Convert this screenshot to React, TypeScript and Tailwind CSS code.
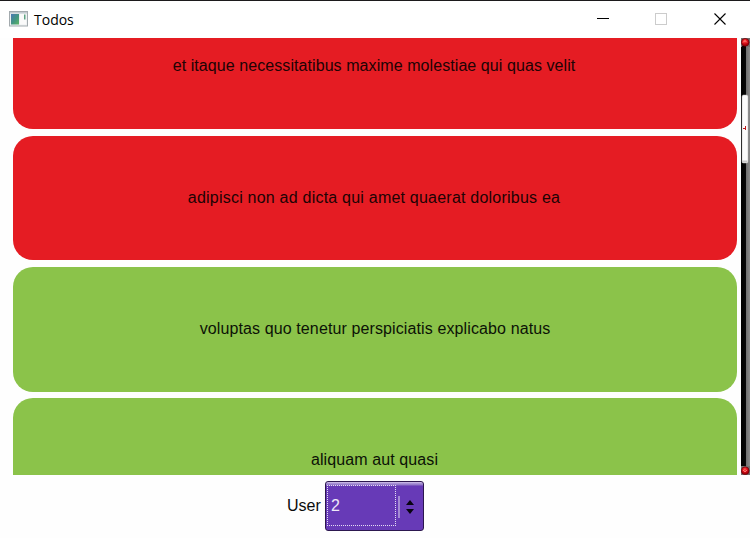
import React from 'react';

type Todo = { title: string; done: boolean; card: string; text: string };

const todos: Todo[] = [
  { title: 'et itaque necessitatibus maxime molestiae qui quas velit', done: false, card: 'h-[124px] pb-[2px] pr-[2px]', text: 'tracking-[0.075px]' },
  { title: 'adipisci non ad dicta qui amet quaerat doloribus ea', done: false, card: 'h-[124px] pr-[2px]', text: 'tracking-[0.22px]' },
  { title: 'voluptas quo tenetur perspiciatis explicabo natus', done: true, card: 'h-[125px] pb-px -mb-px', text: 'tracking-[0.115px]' },
  { title: 'aliquam aut quasi', done: true, card: 'h-[124px] pr-px', text: 'tracking-[0.1px]' },
];

function AppIcon() {
  return (
    <svg width="19" height="16" viewBox="0 0 19 16" className="-mt-px block">
      <defs>
        <linearGradient id="pane" x1="0" y1="0" x2="1" y2="1">
          <stop offset="0" stopColor="#4b78b5" />
          <stop offset="0.55" stopColor="#43977f" />
          <stop offset="1" stopColor="#5fb565" />
        </linearGradient>
      </defs>
      <rect x="0.5" y="0.5" width="18" height="14.5" fill="#eef1f2" stroke="#a3aaae" />
      <rect x="1" y="1" width="17" height="1.5" fill="#c3cbd0" />
      <rect x="2" y="3" width="8" height="10.5" fill="url(#pane)" />
      <rect x="11" y="3" width="6" height="10.5" fill="#fafafa" />
      <rect x="15" y="3.5" width="1.5" height="5" fill="#5fa383" />
    </svg>
  );
}

function TitleBar() {
  return (
    <header className="flex h-[38px] shrink-0 items-center border-t border-[#1c1a1c] bg-white pl-[9px] pr-[23px]">
      <AppIcon />
      <span className="ml-[6px] font-['Open_Sans','Noto_Sans',sans-serif] text-sm leading-5 text-black">Todos</span>
      <svg width="132" height="14" viewBox="0 0 132 14" className="-mt-[2px] ml-auto block" shapeRendering="crispEdges">
        <rect x="2" y="6" width="12" height="1" fill="#000" />
        <rect x="60.5" y="1.5" width="11" height="11" fill="none" stroke="#ccc" />
        <path d="M119.5 1.5l11 11M130.5 1.5l-11 11" stroke="#000" strokeWidth="1.1" shapeRendering="auto" />
      </svg>
    </header>
  );
}

function TodoCard({ title, done, card, text }: Todo) {
  return (
    <li className={`flex shrink-0 items-center justify-center rounded-[20px] ${card} ${done ? 'bg-[#8bc34a]' : 'bg-[#e51c23]'}`}>
      <span className={`whitespace-nowrap text-base leading-5 ${text} ${done ? 'text-[#0c1206]' : 'text-[#200304]'}`}>{title}</span>
    </li>
  );
}

function ScrollBar() {
  return (
    <svg width="9" height="437" viewBox="0 0 9 437" className="block shrink-0">
      <defs>
        <linearGradient id="track">
          <stop offset="0" stopColor="#000" />
          <stop offset="0.5" stopColor="#080808" />
          <stop offset="0.56" stopColor="#6f6f6f" />
          <stop offset="1" stopColor="#8b8b8b" />
        </linearGradient>
        <radialGradient id="knob" cx="0.45" cy="0.35">
          <stop offset="0" stopColor="#ff6258" />
          <stop offset="0.5" stopColor="#e41620" />
          <stop offset="1" stopColor="#ad0009" />
        </radialGradient>
      </defs>
      <rect width="9" height="437" fill="url(#track)" />
      <rect width="9" height="9" fill="#747171" />
      <rect x="1" y="8" width="4" height="2" fill="#100" />
      <circle cx="4.2" cy="4.3" r="3.9" fill="url(#knob)" stroke="#550005" strokeWidth="0.6" />
      <path d="M2 4.5l2-2 2 2" fill="none" stroke="#ff8c82" strokeWidth="0.8" />
      <rect x="1" y="57" width="6" height="68" rx="1.5" fill="#fcfcfc" stroke="#bbb" strokeWidth="0.5" />
      <path d="M1 122.5h5.5v2H1z" fill="#c9c9c9" />
      <path d="M2 90h2v-2h1v4H4v-1H2z" fill="#bd1719" />
      <rect y="428" width="9" height="9" fill="#747171" />
      <circle cx="4.2" cy="432.7" r="3.9" fill="url(#knob)" stroke="#550005" strokeWidth="0.6" />
      <path d="M2 432l2 2 2-2" fill="none" stroke="#ff8c82" strokeWidth="0.8" />
    </svg>
  );
}

function UserSpinner() {
  return (
    <div className="flex h-[50px] w-[99px] items-center rounded-[3px] border border-[#2c174f] bg-[linear-gradient(180deg,#d8cdec_0px,#b29bdb_1px,#8f75c5_3px,#673ab7_4px,#673ab7_100%)] pl-px">
      <div className="-mt-px flex h-[41px] w-[69px] items-center border border-dotted border-[#e5def2] pl-[3px] text-base text-[#eee9f8]">2</div>
      <div className="ml-[2px] mt-[2px] h-[22px] w-[2px] bg-[#a58bd5]" />
      <svg width="8" height="14" viewBox="0 0 8 14" className="ml-[6px] mt-[2px] block">
        <path d="M0 5L4 0l4 5zM0 9h8l-4 5z" fill="#080411" />
      </svg>
    </div>
  );
}

export default function App() {
  return (
    <div className="flex h-[538px] w-[750px] flex-col overflow-hidden bg-[#fefefe] font-['Liberation_Sans',Arial,sans-serif]">
      <TitleBar />
      <main className="flex h-[437px] shrink-0 overflow-hidden pl-[13px]">
        <ul className="-mt-[33px] flex w-[724px] shrink-0 flex-col gap-[7px]">
          {todos.map((todo) => (
            <TodoCard key={todo.title} {...todo} />
          ))}
        </ul>
        <div className="ml-1">
          <ScrollBar />
        </div>
      </main>
      <footer className="flex grow items-center pl-[287px] pb-px">
        <label className="w-[38px] text-base leading-5 text-[#0b0b0b]">User</label>
        <UserSpinner />
      </footer>
    </div>
  );
}
